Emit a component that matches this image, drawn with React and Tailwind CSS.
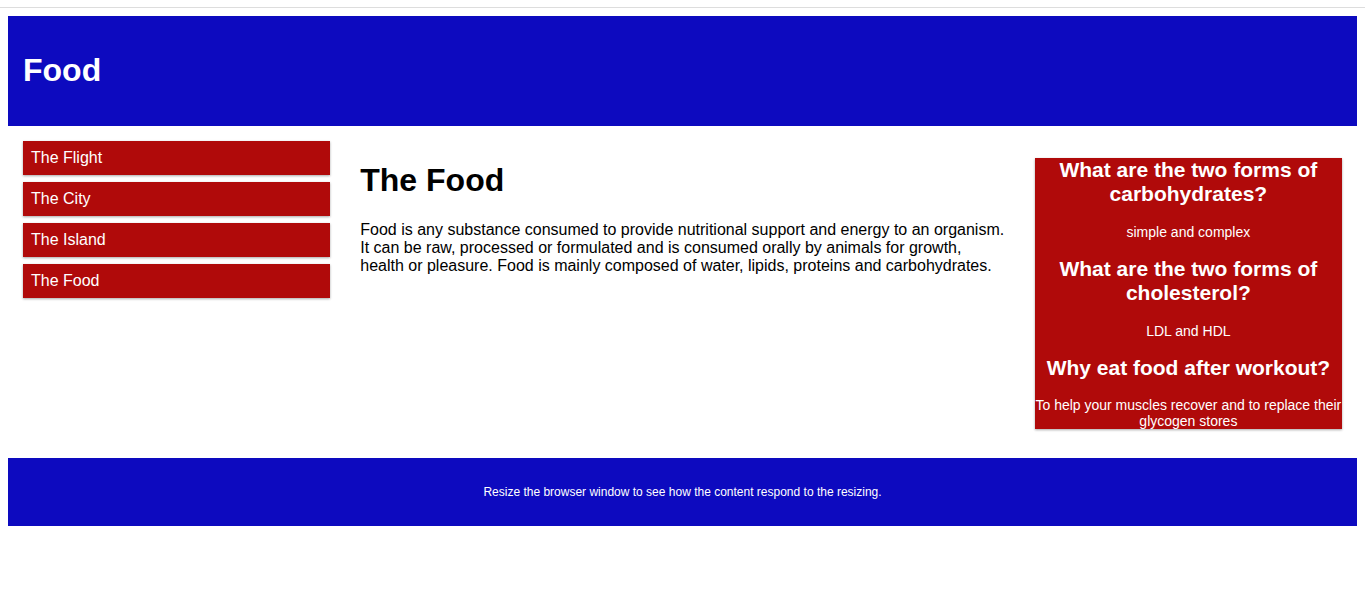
export default function App() {
  const menu = ['The Flight', 'The City', 'The Island', 'The Food']

  return (
    <div className="min-h-[594px] bg-white font-['Liberation_Sans',Arial,sans-serif]">
      <div className="h-[7px]" />
      <div className="h-px bg-[#dddddd]" />
      <div className="px-[8px] pt-[8px]">
        <header className="bg-[#0d0abf] text-white p-[15px]">
          <h1 className="text-[32px] font-bold leading-[37px] my-[21.44px]">Food</h1>
        </header>

        <div className="flex">
          <div className="w-1/4 p-[15px]">
            <ul className="flex flex-col gap-[7px]">
              {menu.map(item => (
                <li
                  key={item}
                  className="bg-[#b00a0a] text-white text-[16px] leading-[18px] p-[8px] pr-[7px] shadow-[0_1px_3px_rgba(0,0,0,0.12),0_1px_2px_rgba(0,0,0,0.24)]"
                >
                  {item}
                </li>
              ))}
            </ul>
          </div>

          <div className="w-1/2 p-[15px]">
            <h1 className="text-[32px] font-bold leading-[37px] mt-[21.44px] mb-[21.44px] text-black">The Food</h1>
            <p className="text-[16px] leading-[18px] text-black">
              Food is any substance consumed to provide nutritional support and energy to an organism. It can be raw, processed or formulated and is consumed orally by animals for growth, health or pleasure. Food is mainly composed of water, lipids, proteins and carbohydrates.
            </p>
          </div>

          <div className="w-1/4 p-[15px]">
            <div className="mt-[17.43px] bg-[#b00a0a] text-white text-center text-[14px] shadow-[0_1px_3px_rgba(0,0,0,0.12),0_1px_2px_rgba(0,0,0,0.24)]">
              <h2 className="text-[21px] font-bold leading-[24px]">What are the two forms of carbohydrates?</h2>
              <p className="leading-[16px] my-[17.43px]">simple and complex</p>
              <h2 className="text-[21px] font-bold leading-[24px]">What are the two forms of cholesterol?</h2>
              <p className="leading-[16px] my-[17.43px]">LDL and HDL</p>
              <h2 className="text-[21px] font-bold leading-[24px]">Why eat food after workout?</h2>
              <p className="leading-[16px] mt-[17.43px]">To help your muscles recover and to replace their glycogen stores</p>
            </div>
          </div>
        </div>

        <footer className="mt-[14px] bg-[#0d0abf] text-white text-center text-[12px] leading-[14px] p-[15px]">
          <p className="my-[12px]">Resize the browser window to see how the content respond to the resizing.</p>
        </footer>
      </div>
    </div>
  )
}
